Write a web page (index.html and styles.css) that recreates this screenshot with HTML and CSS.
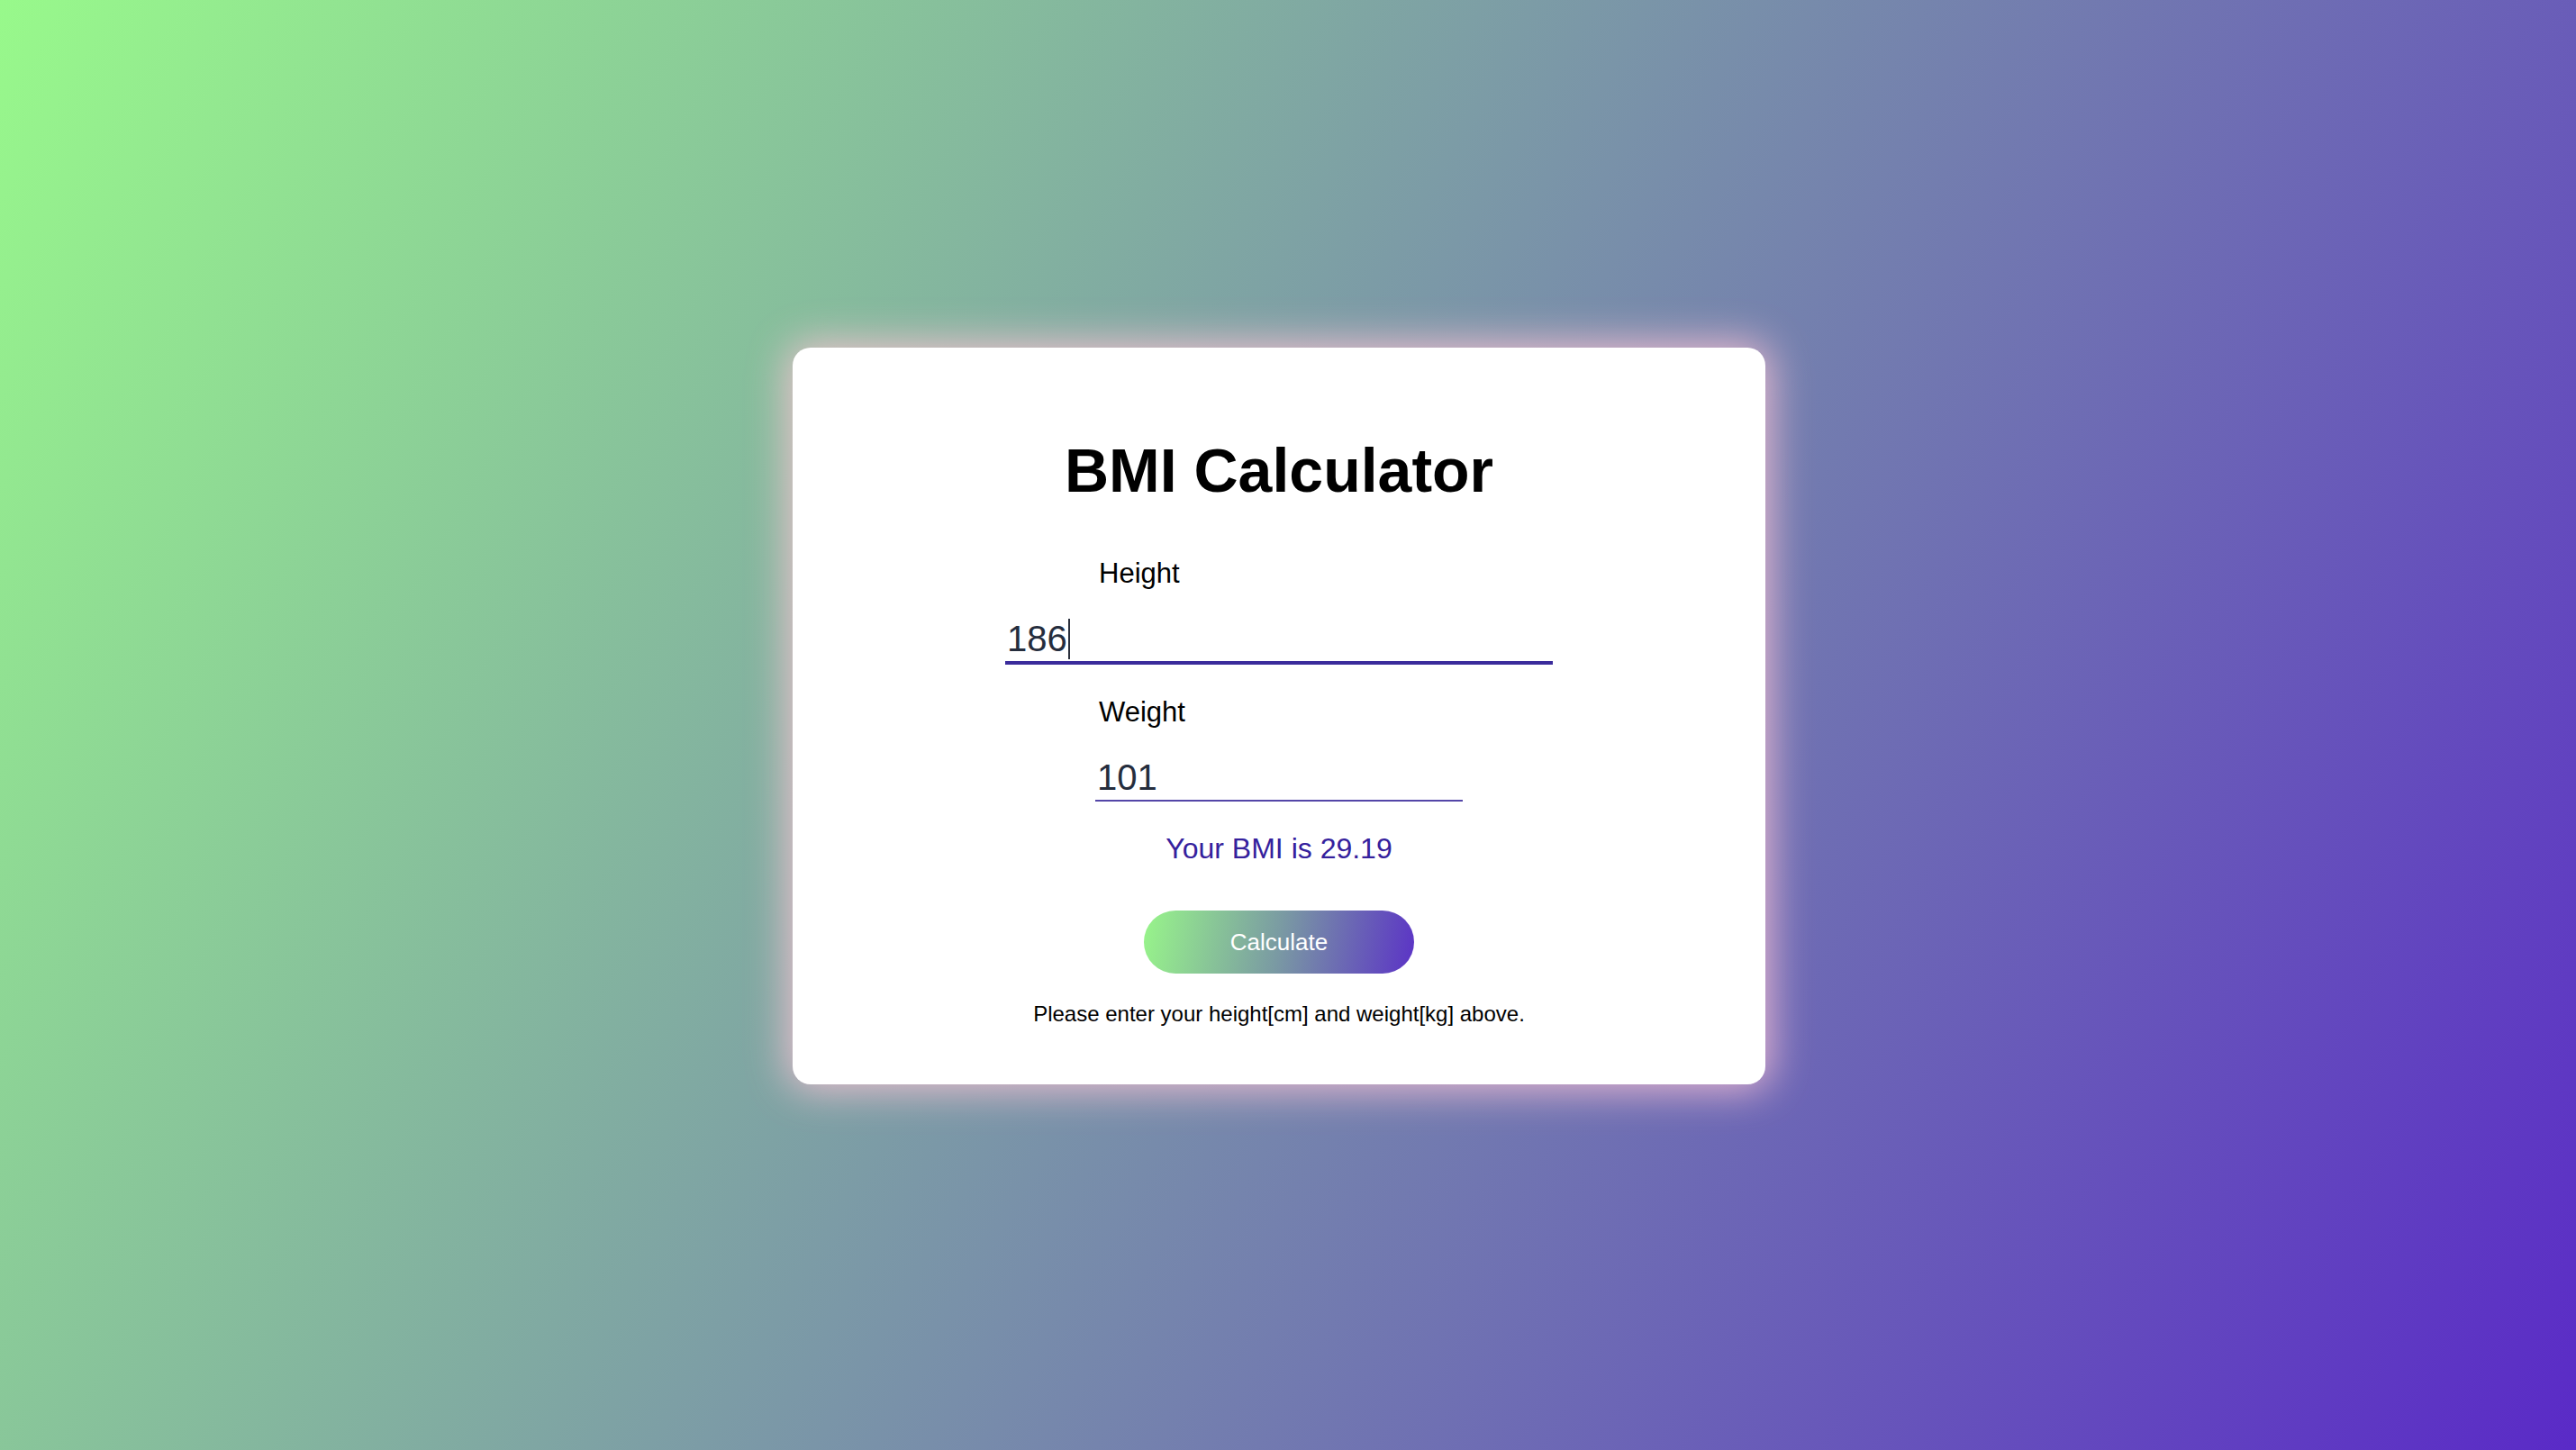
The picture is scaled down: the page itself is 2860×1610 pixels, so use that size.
FILE: index.html
```html
<!DOCTYPE html>
<html lang="en">
<head>
<meta charset="utf-8">
<title>BMI Calculator</title>
<link rel="stylesheet" href="styles.css">
</head>
<body>
  <main class="card">
    <h1 class="title">BMI Calculator</h1>
    <div class="group">
      <label class="label" for="height">Height</label>
      <div class="field field-focused">
        <input class="input input-focused" id="height" type="text" value="186">
        <span class="caret"></span>
      </div>
    </div>
    <div class="group group-second">
      <label class="label" for="weight">Weight</label>
      <div class="field">
        <input class="input" id="weight" type="text" value="101">
      </div>
    </div>
    <p class="result">Your BMI is 29.19</p>
    <button class="btn" type="button">Calculate</button>
    <p class="note">Please enter your height[cm] and weight[kg] above.</p>
  </main>
</body>
</html>
```
FILE: styles.css
```css
* { box-sizing: border-box; }

html, body {
  margin: 0;
  height: 100%;
}

body {
  min-height: 100vh;
  display: flex;
  justify-content: center;
  align-items: center;
  padding: 0 20px 20px 0;
  background: linear-gradient(120deg, #98f98b 0%, #5a2ac7 100%);
  font-family: "Liberation Sans", Arial, Helvetica, sans-serif;
  color: #000;
}

.card {
  width: 1080px;
  background: #fff;
  border-radius: 20px;
  padding: 96px 0 64px;
  display: flex;
  flex-direction: column;
  align-items: center;
  box-shadow: 0 0 45px 6px rgba(255, 196, 214, 0.85);
}

.title {
  margin: 0;
  font-size: 68px;
  line-height: 80px;
  font-weight: 700;
}

.group {
  margin-top: 57px;
  width: 608px;
  display: flex;
  flex-direction: column;
  align-items: center;
}

.group-second {
  margin-top: 35px;
}

.label {
  width: 408px;
  padding-left: 4px;
  font-size: 31px;
  line-height: 36px;
  margin-bottom: 30px;
}

.field {
  position: relative;
  width: 408px;
}

.field-focused {
  width: 608px;
}

.input {
  display: block;
  width: 100%;
  height: 51px;
  margin: 0;
  padding: 0 2px;
  border: none;
  border-bottom: 2px solid #5446a8;
  outline: none;
  background: transparent;
  font-family: "Liberation Sans", Arial, Helvetica, sans-serif;
  font-size: 40px;
  line-height: 48px;
  color: #252d3d;
}

.input-focused {
  height: 53px;
  border-bottom: 4px solid #3a2b9b;
}

.caret {
  position: absolute;
  left: 70px;
  top: 2px;
  width: 2px;
  height: 45px;
  background: #2a2f3c;
}

.result {
  margin: 33px 0 0;
  font-size: 32px;
  line-height: 38px;
  color: #35219d;
}

.btn {
  margin-top: 50px;
  width: 300px;
  height: 70px;
  border: none;
  border-radius: 35px;
  background: linear-gradient(100deg, #98f58a 0%, #7a9aa3 50%, #5b33c6 100%);
  color: #fff;
  font-family: "Liberation Sans", Arial, Helvetica, sans-serif;
  font-size: 26px;
  line-height: 30px;
  padding: 0;
  cursor: pointer;
}

.note {
  margin: 31px 0 0;
  font-size: 24px;
  line-height: 28px;
}
```
